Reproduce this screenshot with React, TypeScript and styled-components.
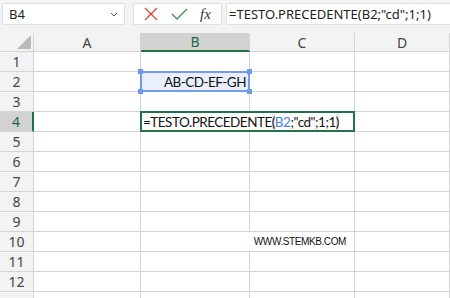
import * as React from 'react';
import styled, { createGlobalStyle } from 'styled-components';

const GlobalStyle = createGlobalStyle`
  html, body {
    margin: 0;
    padding: 0;
    background: #ffffff;
    overflow: hidden;
  }
`;

const Page = styled.div`
  width: 450px;
  height: 298px;
  overflow: hidden;
  font-family: "Noto Sans", "Open Sans", sans-serif;
`;

const TopBar = styled.div`
  display: flex;
  align-items: flex-start;
  height: 33px;
  padding: 3px 0 0 2px;
  box-sizing: border-box;
  background: #f3f3f3;
`;

const NameBox = styled.div`
  width: 123px;
  height: 22px;
  box-sizing: border-box;
  border: 1px solid #e1e1e1;
  background: #ffffff;
  display: flex;
  align-items: center;
  justify-content: space-between;
  padding: 0 6px 0 6px;
  font-size: 13px;
  color: #222;
`;

const IconBox = styled.div`
  margin-left: 8px;
  width: 89px;
  height: 22px;
  box-sizing: border-box;
  border: 1px solid #e1e1e1;
  background: #ffffff;
  display: flex;
  align-items: center;
  justify-content: space-around;
  padding: 0 4px;
`;

const FxLabel = styled.span`
  font-family: "Liberation Serif", serif;
  font-style: italic;
  font-size: 15px;
  color: #333;
`;

const FormulaBox = styled.div`
  margin-left: 4px;
  flex: 1;
  height: 22px;
  box-sizing: border-box;
  border: 1px solid #e1e1e1;
  border-right: none;
  background: #ffffff;
  display: flex;
  align-items: center;
  padding-left: 2px;
  font-size: 13px;
  color: #222;
  white-space: nowrap;
`;

const Sheet = styled.div`
  display: grid;
  grid-template-columns: 34px 107px 109px 105px 1fr;
  grid-template-rows: 19px repeat(13, 20px);
`;

const Corner = styled.div`
  position: relative;
  background: #f3f3f3;
  border-right: 1px solid #d4d4d4;
  border-bottom: 1px solid #d4d4d4;
  box-sizing: border-box;
`;

const CornerTriangle = styled.div`
  position: absolute;
  right: 2px;
  bottom: 2px;
  width: 0;
  height: 0;
  border-left: 14px solid transparent;
  border-bottom: 14px solid #b9b9b9;
`;

const ColHeader = styled.div<{ $active?: boolean }>`
  background: ${p => (p.$active ? '#d2d2d2' : '#f3f3f3')};
  color: ${p => (p.$active ? '#1e6b40' : '#444')};
  border-right: 1px solid #d4d4d4;
  border-bottom: ${p => (p.$active ? '2px solid #217346' : '1px solid #d4d4d4')};
  box-sizing: border-box;
  display: flex;
  align-items: center;
  justify-content: center;
  font-size: 14px;
`;

const RowHeader = styled.div<{ $active?: boolean }>`
  background: ${p => (p.$active ? '#d2d2d2' : '#f3f3f3')};
  color: ${p => (p.$active ? '#1e6b40' : '#444')};
  border-right: ${p => (p.$active ? '2px solid #217346' : '1px solid #d4d4d4')};
  border-bottom: 1px solid #d4d4d4;
  box-sizing: border-box;
  display: flex;
  align-items: center;
  justify-content: center;
  font-size: 14px;
`;

const Cell = styled.div`
  border-right: 1px solid #d4d4d4;
  border-bottom: 1px solid #d4d4d4;
  box-sizing: border-box;
  white-space: nowrap;
`;

const RangeCell = styled.div`
  position: relative;
  margin: -1px 0 0 -1px;
  background: #eaf0fb;
  border: 2px solid #739bef;
  box-sizing: border-box;
  display: flex;
  align-items: center;
  justify-content: flex-end;
  padding-right: 2px;
  font-family: Lato, "Open Sans", sans-serif;
  font-size: 13.5px;
  letter-spacing: -0.5px;
  color: #111;
`;

const Handle = styled.span<{ $top: boolean; $left: boolean }>`
  position: absolute;
  width: 5px;
  height: 5px;
  background: #6e97ee;
  ${p => (p.$top ? 'top: -4px;' : 'bottom: -4px;')}
  ${p => (p.$left ? 'left: -4px;' : 'right: -4px;')}
`;

const EditCell = styled.div`
  grid-column: span 2;
  margin: -1px 0 0 -1px;
  border: 2px solid #217346;
  box-sizing: border-box;
  display: flex;
  align-items: center;
  padding-left: 1px;
  font-family: Lato, "Open Sans", sans-serif;
  font-size: 13.5px;
  letter-spacing: -0.5px;
  color: #111;
  white-space: nowrap;
  background: #ffffff;
`;

const Paren = styled.span`
  background: #e4e4e4;
`;

const Ref = styled.span`
  color: #4a80e8;
`;

const Watermark = styled.div`
  grid-column: span 2;
  border-right: 1px solid #d4d4d4;
  border-bottom: 1px solid #d4d4d4;
  box-sizing: border-box;
  display: flex;
  align-items: center;
  justify-content: flex-end;
  padding-right: 8px;
  font-family: "Liberation Sans", Arial, sans-serif;
  font-size: 10px;
  letter-spacing: -0.4px;
  color: #111;
  white-space: nowrap;
`;

const columns = ['A', 'B', 'C', 'D'];
const rows = Array.from({ length: 13 }, (_, i) => i + 1);
const lastVisibleRow = 12;

const Chevron = () => (
  <svg width="8" height="5" viewBox="0 0 8 5">
    <path d="M1 1 L4 4 L7 1" fill="none" stroke="#555" strokeWidth="1" />
  </svg>
);

const Cross = () => (
  <svg width="14" height="14" viewBox="0 0 14 14">
    <path d="M1 1 L13 13 M13 1 L1 13" stroke="#e2403b" strokeWidth="1.3" />
  </svg>
);

const Check = () => (
  <svg width="17" height="13" viewBox="0 0 17 13">
    <path d="M1 6 L6 11 L16 1" fill="none" stroke="#2e9b4a" strokeWidth="1.3" />
  </svg>
);

const Formula = () => (
  <>
    =TESTO.PRECEDENTE<Paren>(</Paren><Ref>B2</Ref>;"cd";1;1<Paren>)</Paren>
  </>
);

const renderRow = (r: number) => {
  // the last row is cut off by the window, its number doesn't show
  const label = (
    <RowHeader key={`h${r}`} $active={r === 4}>
      {r <= lastVisibleRow ? r : ''}
    </RowHeader>
  );
  if (r === 2) {
    return [
      label,
      <Cell key="a2" />,
      <RangeCell key="b2">
        AB-CD-EF-GH
        <Handle $top $left />
        <Handle $top $left={false} />
        <Handle $top={false} $left />
        <Handle $top={false} $left={false} />
      </RangeCell>,
      <Cell key="c2" />,
      <Cell key="d2" />,
    ];
  }
  if (r === 4) {
    return [
      label,
      <Cell key="a4" />,
      <EditCell key="b4"><Formula /></EditCell>,
      <Cell key="d4" />,
    ];
  }
  if (r === 10) {
    return [
      label,
      <Cell key="a10" />,
      <Watermark key="b10">WWW.STEMKB.COM</Watermark>,
      <Cell key="d10" />,
    ];
  }
  return [label, ...columns.map(c => <Cell key={`${c}${r}`} />)];
};

const App: React.FC = () => (
  <Page>
    <GlobalStyle />
    <TopBar>
      <NameBox>
        B4
        <Chevron />
      </NameBox>
      <IconBox>
        <Cross />
        <Check />
        <FxLabel>fx</FxLabel>
      </IconBox>
      <FormulaBox>=TESTO.PRECEDENTE(B2;"cd";1;1)</FormulaBox>
    </TopBar>
    <Sheet>
      <Corner>
        <CornerTriangle />
      </Corner>
      {columns.map(c => (
        <ColHeader key={c} $active={c === 'B'}>{c}</ColHeader>
      ))}
      {rows.map(renderRow)}
    </Sheet>
  </Page>
);

export default App;
